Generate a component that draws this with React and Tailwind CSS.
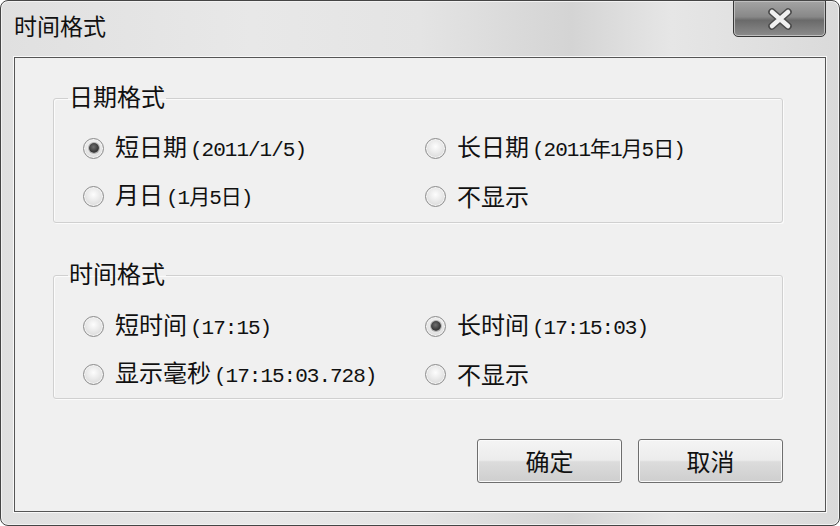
const CJK = "font-['Noto_Sans_CJK_SC',sans-serif]";
const MONO = "font-['Liberation_Mono','Noto_Sans_CJK_SC',monospace]";

function Radio({ checked }) {
  return (
    <span className="flex h-[21px] w-[21px] shrink-0 items-center justify-center rounded-full border border-[#8c8c8c] bg-[radial-gradient(circle_at_50%_40%,#fdfdfd,#e0e0e0_65%,#c4c4c4)] shadow-[inset_0_0_0_1px_#f4f4f4]">
      {checked && (
        <span className="h-[10px] w-[10px] rounded-full bg-[radial-gradient(circle_at_45%_40%,#707070,#383838_60%,#808080)] shadow-[0_0_0_1px_#b4b4b4]" />
      )}
    </span>
  );
}

function Option({ checked, label, paren }) {
  return (
    <div className="flex h-[48px] items-center gap-[11px]">
      <Radio checked={checked} />
      <span className="flex items-baseline text-[#111111]">
        <span className={`${CJK} text-[24px] leading-[28px]`}>{label}</span>
        {paren && (
          <span className={`${MONO} ml-[3px] text-[21px] leading-[28px] tracking-[-1px]`}>{paren}</span>
        )}
      </span>
    </div>
  );
}

function Group({ title, options, first }) {
  return (
    <fieldset
      className={`rounded-[3px] border border-[#d0d0d0] shadow-[inset_1px_1px_0_#fbfbfb,1px_1px_0_#fbfbfb] ${
        first ? "mt-[26px]" : "mt-[38px]"
      }`}
    >
      <legend className={`${CJK} ml-[14px] px-[1px] text-[24px] leading-[28px] text-[#111111]`}>
        <span className="relative -top-[2px]">{title}</span>
      </legend>
      <div
        className={`grid grid-cols-[342px_1fr] pl-[29px] ${
          first ? "pt-[12px] pb-[2px]" : "pt-[13px] pb-[0px]"
        }`}
      >
        {options.map((o) => (
          <Option key={o.label + (o.paren || "")} {...o} />
        ))}
      </div>
    </fieldset>
  );
}

const DATE_OPTIONS = [
  { checked: true, label: "短日期", paren: "(2011/1/5)" },
  { checked: false, label: "长日期", paren: "(2011年1月5日)" },
  { checked: false, label: "月日", paren: "(1月5日)" },
  { checked: false, label: "不显示" },
];

const TIME_OPTIONS = [
  { checked: false, label: "短时间", paren: "(17:15)" },
  { checked: true, label: "长时间", paren: "(17:15:03)" },
  { checked: false, label: "显示毫秒", paren: "(17:15:03.728)" },
  { checked: false, label: "不显示" },
];

function Button({ children }) {
  return (
    <button className="flex h-[44px] w-[145px] items-center justify-center rounded-[3px] border border-[#6e6e6e] bg-[linear-gradient(#f4f4f4,#ececec_48%,#dcdcdc_52%,#cecece)] shadow-[inset_0_0_0_1px_#fafafa]">
      <span className={`${CJK} text-[24px] leading-[28px] text-[#111111]`}>{children}</span>
    </button>
  );
}

export default function App() {
  return (
    <div className="flex h-[526px] w-[840px] flex-col overflow-hidden rounded-[8px] border border-[#454545] bg-[linear-gradient(90deg,#e0e0e0,#e8e8e8_30%,#e4e4e4_50%,#d4d4d4_68%,#e6e6e6_80%,#dadada)] shadow-[inset_0_0_0_1px_#f2f2f2]">
      <div className="flex h-[56px] shrink-0 items-start justify-between">
        <span className={`${CJK} ml-[13px] mt-[10px] text-[23px] leading-[28px] text-[#111111]`}>
          时间格式
        </span>
        <div className="-mt-[1px] mr-[13px] flex h-[37px] w-[93px] items-center justify-center rounded-b-[5px] border border-[#383838] bg-[linear-gradient(#a4a4a4,#888888_45%,#6a6a6a_55%,#8c8c8c)] shadow-[inset_0_0_0_1px_#bebebe]">
          <svg width="28" height="22" viewBox="0 0 28 22">
            <path d="M6 4 L22 18 M22 4 L6 18" stroke="#4a4a4a" strokeWidth="7.5" strokeLinecap="round" />
            <path d="M6 4 L22 18 M22 4 L6 18" stroke="#f0f0f0" strokeWidth="4.5" strokeLinecap="round" />
          </svg>
        </div>
      </div>
      <div className="mx-[13px] mb-[13px] flex h-[455px] flex-col border border-[#555555] bg-[#f0f0f0] pl-[38px] pr-[42px] shadow-[0_0_0_1px_#f8f8f8]">
        <Group title="日期格式" options={DATE_OPTIONS} first />
        <Group title="时间格式" options={TIME_OPTIONS} />
        <div className="mt-[40px] flex justify-end gap-[16px]">
          <Button>确定</Button>
          <Button>取消</Button>
        </div>
      </div>
    </div>
  );
}
